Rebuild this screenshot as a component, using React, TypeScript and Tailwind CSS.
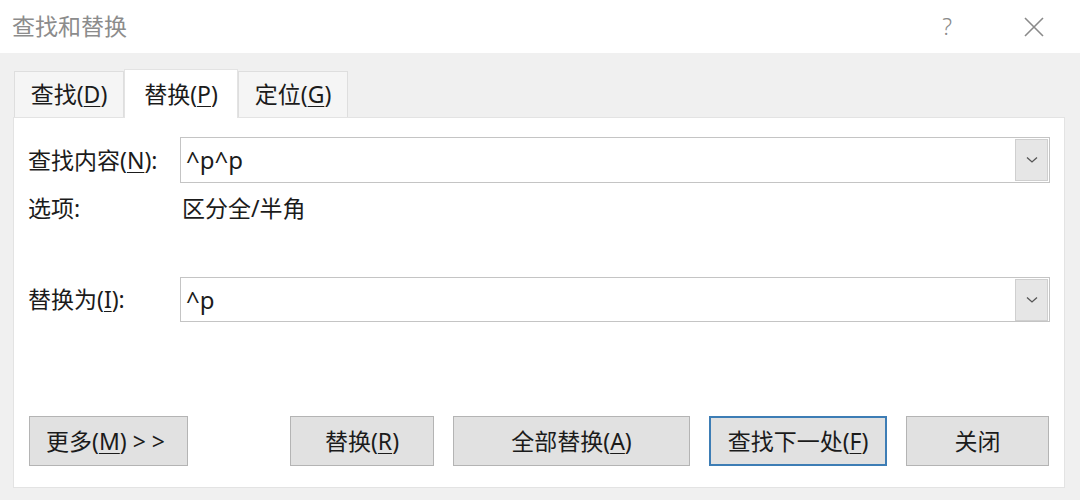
import { FC, ReactNode } from "react";

const font = "font-['Noto_Sans','Noto_Sans_CJK_SC',sans-serif]";

const Key: FC<{ children: ReactNode }> = ({ children }) => (
  <span className="underline underline-offset-[3px] decoration-1">{children}</span>
);

const Combo: FC<{ value: string }> = ({ value }) => (
  <div className="flex-1 h-full flex items-center border border-[#c4c4c4] bg-white pl-[5px] pr-[1px]">
    <span className="flex-1 text-[24px] text-[#1b1b1b]">{value}</span>
    <div className="w-[33px] h-[42px] bg-[#e6e6e6] border border-[#cfcfcf] flex items-center justify-center">
      <svg width="12" height="8" viewBox="0 0 12 8">
        <path d="M1 1.5 L6 6 L11 1.5" fill="none" stroke="#555" strokeWidth="1.3" />
      </svg>
    </div>
  </div>
);

const Btn: FC<{ w: string; focus?: boolean; children: ReactNode }> = ({ w, focus, children }) => (
  <div
    className={`${w} h-[50px] flex items-center justify-center bg-[#e1e1e1] text-[23px] text-[#1b1b1b] border ${
      focus ? "border-[#3d7db5] border-2" : "border-[#b4b4b4]"
    }`}
  >
    {children}
  </div>
);

export default function App() {
  return (
    <div className={`w-[1080px] h-[500px] flex flex-col bg-[#f0f0f0] ${font}`}>
      {/* title bar */}
      <div className="h-[53px] bg-white flex items-center pl-[12px] pr-[36px]">
        <span className="text-[23px] text-[#8c8c8c] flex-1">查找和替换</span>
        <span className="text-[23px] text-[#8a8a8a] font-light mr-[72px]">?</span>
        <svg width="20" height="20" viewBox="0 0 20 20">
          <path d="M1 1 L19 19 M19 1 L1 19" stroke="#8a8a8a" strokeWidth="1.6" />
        </svg>
      </div>

      <div className="flex-1 flex flex-col pt-[16px] pl-[13px] pr-[15px] pb-[12px]">
        {/* tabs */}
        <div className="flex items-end h-[48px] pl-[1px]">
          <div className="w-[110px] h-[46px] bg-[#f5f5f5] border border-b-0 border-[#dedede] flex items-center justify-center text-[23px] text-[#1b1b1b]">
            查找(<Key>D</Key>)
          </div>
          <div className="w-[114px] h-[49px] bg-white border border-b-0 border-[#e3e3e3] -mb-[1px] z-10 flex items-center justify-center text-[23px] text-[#1b1b1b]">
            替换(<Key>P</Key>)
          </div>
          <div className="w-[110px] h-[46px] bg-[#f5f5f5] border border-b-0 border-[#dedede] flex items-center justify-center text-[23px] text-[#1b1b1b]">
            定位(<Key>G</Key>)
          </div>
        </div>

        {/* panel */}
        <div className="flex-1 bg-white border border-[#e3e3e3] flex flex-col px-[14px] pb-[21px]">
          <div className="mt-[19px] h-[46px] flex items-center">
            <span className="w-[152px] text-[23px] text-[#1b1b1b]">
              查找内容(<Key>N</Key>):
            </span>
            <Combo value="^p^p" />
          </div>
          <div className="h-[50px] flex items-center text-[23px] text-[#1b1b1b]">
            <span className="w-[154px]">选项:</span>
            <span>区分全/半角</span>
          </div>
          <div className="mt-[44px] h-[45px] flex items-center">
            <span className="w-[152px] text-[23px] text-[#1b1b1b]">
              替换为(<Key>I</Key>):
            </span>
            <Combo value="^p" />
          </div>

          <div className="mt-auto flex items-center pl-[1px]">
            <Btn w="w-[159px]">
              <span className="-ml-[6px]">
                更多(<Key>M</Key>) &gt; &gt;
              </span>
            </Btn>
            <div className="ml-[102px] flex gap-[19px]">
              <Btn w="w-[144px]">
                替换(<Key>R</Key>)
              </Btn>
              <Btn w="w-[237px]">
                全部替换(<Key>A</Key>)
              </Btn>
              <Btn w="w-[178px]" focus>
                查找下一处(<Key>F</Key>)
              </Btn>
              <Btn w="w-[143px]">关闭</Btn>
            </div>
          </div>
        </div>
      </div>
    </div>
  );
}
